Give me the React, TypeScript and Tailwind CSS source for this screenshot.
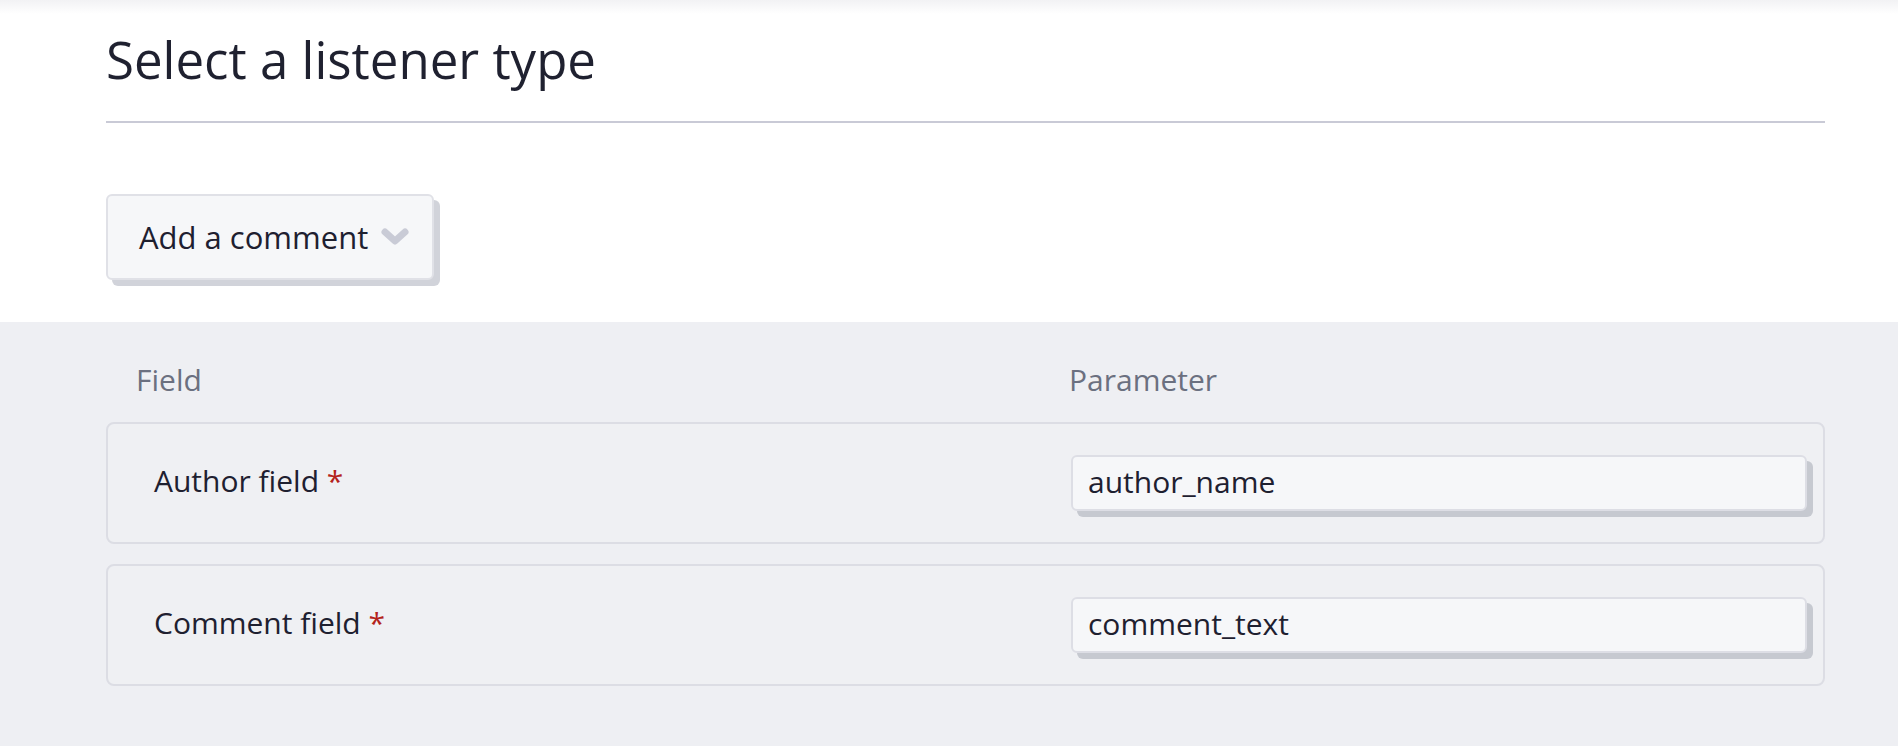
import React from 'react';

interface FieldRowProps {
  label: string;
  value: string;
}

const FieldRow: React.FC<FieldRowProps> = ({ label, value }) => {
  return (
    <div className="flex items-center h-[122px] rounded-lg border-2 border-[#dcdde4] bg-[#eff0f3]">
      <div className="w-[963px] pl-[46px] pb-[6px] text-[30px] text-[#1e2030]">
        {label} <span className="text-[#b4231b]">*</span>
      </div>
      <div className="flex-1 pr-[16px]">
        <div className="relative">
          <div className="absolute inset-0 translate-x-[6px] translate-y-[6px] rounded-md bg-[#c6c9d0]" />
          <input
            readOnly
            value={value}
            className="relative w-full h-[56px] rounded-md border-2 border-[#dddee5] bg-[#f6f7f9] px-[15px] pb-[4px] text-[30px] text-[#1e2030] outline-none"
          />
        </div>
      </div>
    </div>
  );
};

export default function App() {
  return (
    <div className="min-h-screen bg-white font-['Open_Sans','Noto_Sans',sans-serif]">
      {/* Header section */}
      <section className="bg-gradient-to-b from-[#f2f2f4] to-white to-[14px] pl-[106px] pr-[73px]">
        <h1 className="pt-[28px] h-[121px] text-[51px] leading-[62px] font-normal text-[#1f2130]">
          Select a listener type
        </h1>
        <div className="h-[2px] bg-[#c9cad6]" />
        <div className="pt-[71px] pb-[42px]">
          <div className="relative w-fit">
            <div className="absolute inset-0 translate-x-[6px] translate-y-[6px] rounded-md bg-[#d1d3da]" />
            <button className="relative flex items-center gap-[12px] h-[86px] pl-[31px] pr-[22px] rounded-md border-2 border-[#e0e1e7] bg-[#f6f7f9] text-[31px] text-[#1e2030]">
              Add a comment
              <svg width="30" height="20" viewBox="0 0 30 20" fill="none">
                <path d="M5 5 L15 14 L25 5" stroke="#c9cbd6" strokeWidth="7" strokeLinecap="round" strokeLinejoin="round" />
              </svg>
            </button>
          </div>
        </div>
      </section>

      {/* Field mapping section */}
      <section className="bg-[#eeeff3] pl-[106px] pr-[73px] pt-[38px] pb-[60px]">
        <div className="flex h-[62px] text-[30px] leading-[40px] text-[#6b7080]">
          <div className="w-[963px] pl-[30px]">Field</div>
          <div>Parameter</div>
        </div>
        <div className="flex flex-col gap-[20px]">
          <FieldRow label="Author field" value="author_name" />
          <FieldRow label="Comment field" value="comment_text" />
        </div>
      </section>
    </div>
  );
}
